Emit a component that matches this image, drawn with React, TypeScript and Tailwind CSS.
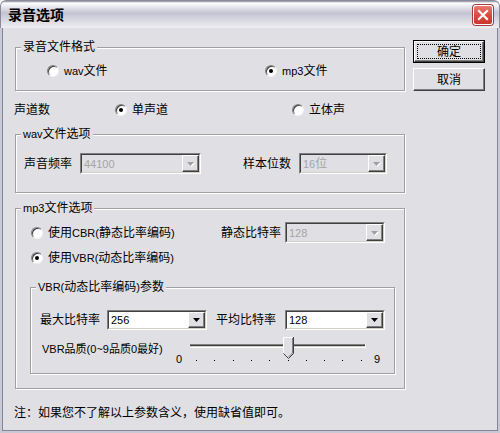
import React from "react";

const FONT = { fontFamily: '"Liberation Sans","Noto Sans CJK SC",sans-serif' };

function T({ s }: { s: string }) {
  const parts = s.split(/([\x00-\x7F]+)/).filter((p) => p.length > 0);
  return (
    <>
      {parts.map((p, i) =>
        /^[\x00-\x7F]+$/.test(p) ? (
          <span key={i} className="text-[11px]">
            {p}
          </span>
        ) : (
          <span key={i}>{p}</span>
        )
      )}
    </>
  );
}

function Radio({ checked }: { checked?: boolean }) {
  return (
    <div className="w-[12px] h-[12px] shrink-0 rounded-full bg-white border border-t-[#808080] border-l-[#808080] border-b-[#f4f4f4] border-r-[#f4f4f4] shadow-[inset_1px_1px_0_#404040] flex items-center justify-center">
      {checked && <div className="w-[4px] h-[4px] rounded-full bg-black" />}
    </div>
  );
}

function RadioLabel({ checked, label, className }: { checked?: boolean; label: string; className?: string }) {
  return (
    <div className={`flex items-center h-[14px] gap-[5px] ${className ?? ""}`}>
      <Radio checked={checked} />
      <span className="text-[12px] leading-[14px] text-black whitespace-nowrap">
        <T s={label} />
      </span>
    </div>
  );
}

function Arrow({ disabled }: { disabled?: boolean }) {
  return (
    <svg width="9" height="6" viewBox="0 0 9 6">
      {disabled && <polygon points="2,2 9,2 5.5,6" fill="#ffffff" />}
      <polygon points="1,1 8,1 4.5,5" fill={disabled ? "#a0a0a0" : "#000000"} />
    </svg>
  );
}

function Combo({ className, value, disabled }: { className: string; value: string; disabled?: boolean }) {
  return (
    <div className={`flex shrink-0 border border-t-[#808080] border-l-[#808080] border-b-white border-r-white ${className}`}>
      <div
        className={`flex flex-1 items-stretch border border-t-[#404040] border-l-[#404040] border-b-[#d4d0c8] border-r-[#d4d0c8] ${
          disabled ? "bg-[#e0dfe3]" : "bg-white"
        }`}
      >
        <div
          className={`flex-1 flex items-center pl-[2px] text-[12px] leading-[14px] ${
            disabled ? "text-[#a5a5a5]" : "text-black"
          }`}
        >
          <span>
            <T s={value} />
          </span>
        </div>
        <div className="w-[17px] flex items-center justify-center bg-[#e0dfe3] border border-t-white border-l-white border-b-[#404040] border-r-[#404040] shadow-[inset_-1px_-1px_0_#808080]">
          <Arrow disabled={disabled} />
        </div>
      </div>
    </div>
  );
}

function Group({ label, className, children }: { label: string; className: string; children?: React.ReactNode }) {
  return (
    <div
      className={`relative border border-[#a0a0a0] shadow-[inset_1px_1px_0_#ffffff,1px_1px_0_#ffffff] ${className}`}
    >
      <span className="absolute left-[5px] top-[-8px] px-[2px] bg-[#e0dfe3] text-[12px] leading-[14px] text-black whitespace-nowrap">
        <T s={label} />
      </span>
      {children}
    </div>
  );
}

function Slider() {
  const ticks = [7, 25, 44, 62, 80, 99, 117, 135, 153, 172];
  return (
    <div className="flex items-start h-[26px]">
      <span className="w-[13px] mt-[16px] text-[11px] leading-[12px] text-black">0</span>
      <svg width="177" height="26" viewBox="0 0 177 26">
        <rect x="1" y="7" width="175" height="1" fill="#808080" />
        <rect x="1" y="8" width="175" height="1" fill="#404040" />
        <rect x="1" y="9" width="175" height="1" fill="#d4d0c8" />
        <rect x="1" y="10" width="175" height="1" fill="#ffffff" />
        <rect x="176" y="7" width="1" height="4" fill="#ffffff" />
        {ticks.map((t) => (
          <rect key={t} x={t} y="23" width="1" height="1" fill="#000" />
        ))}
        <polygon points="94,0 104,0 104,16 99,21 94,16" fill="#e0dfe3" />
        <polyline points="94.5,16 94.5,0.5 103.5,0.5" fill="none" stroke="#ffffff" strokeWidth="1" />
        <polyline points="104.5,0 104.5,16.5 99.5,21.5 94.5,16.5" fill="none" stroke="#404040" strokeWidth="1" />
        <polyline points="103.5,1 103.5,16 99.5,20" fill="none" stroke="#808080" strokeWidth="1" />
      </svg>
      <span className="ml-[8px] mt-[16px] text-[11px] leading-[12px] text-black">9</span>
    </div>
  );
}

export default function App() {
  return (
    <div style={FONT} className="w-[500px] h-[433px] bg-[#c9c9d6] flex flex-col rounded-t-[6px] overflow-hidden">
      {/* Title bar */}
      <div className="h-[28px] shrink-0 flex items-center justify-between pl-[7px] pr-[6px] bg-[linear-gradient(to_bottom,#8a8a9a_0px,#ffffff_2px,#e6e6ee_6px,#c4c4d2_12px,#d6d6e0_18px,#eeeef2_27px)] rounded-t-[6px] border-t border-l border-r border-[#8a8a9a]">
        <span className="text-[14px] leading-[16px] font-bold text-black mt-[1px]">录音选项</span>
        <div className="w-[20px] h-[20px] rounded-[3px] border border-white bg-[linear-gradient(to_bottom,#ec7a6e,#dc4a3e_50%,#c8382e)] flex items-center justify-center shadow-[0_0_0_1px_#a04040]">
          <svg width="12" height="12" viewBox="0 0 12 12">
            <path d="M2 2 L10 10 M10 2 L2 10" stroke="#ffffff" strokeWidth="2.2" strokeLinecap="square" />
          </svg>
        </div>
      </div>
      {/* Body */}
      <div className="flex-1 mx-[2px] mb-[2px] bg-[#e0dfe3] border border-t-0 border-[#85859a] pl-[12px] pt-[12px] flex flex-col text-black">
        {/* Row A */}
        <div className="flex">
          <div className="w-[390px]">
            <Group label="录音文件格式" className="mt-[7px] h-[44px]">
              <div className="flex pt-[16px] pl-[31px]">
                <div className="w-[218px]">
                  <RadioLabel label="wav文件" />
                </div>
                <RadioLabel checked label="mp3文件" />
              </div>
            </Group>
          </div>
          <div className="ml-[8px] flex flex-col gap-[5px]">
            <div className="w-[72px] h-[23px] border border-black bg-[#e0dfe3]">
              <div className="w-full h-full border border-t-white border-l-white border-b-[#404040] border-r-[#404040] shadow-[inset_-1px_-1px_0_#808080] flex items-center justify-center p-[2px]">
                <div className="w-full h-full border border-dotted border-black flex items-center justify-center text-[12px] leading-[14px]">
                  确定
                </div>
              </div>
            </div>
            <div className="w-[72px] h-[23px] bg-[#e0dfe3] border border-t-white border-l-white border-b-[#404040] border-r-[#404040] shadow-[inset_-1px_-1px_0_#808080] flex items-center justify-center text-[12px] leading-[14px]">
              取消
            </div>
          </div>
        </div>

        {/* 声道数 */}
        <div className="flex items-center h-[14px] mt-[12px] ml-[-1px]">
          <span className="w-[101px] text-[12px] leading-[14px]">声道数</span>
          <div className="w-[177px]">
            <RadioLabel checked label="单声道" />
          </div>
          <RadioLabel label="立体声" />
        </div>

        {/* wav group */}
        <Group label="wav文件选项" className="w-[390px] h-[59px] mt-[17px]">
          <div className="flex items-center pt-[18px] pl-[8px]">
            <span className="w-[56px] text-[12px] leading-[14px]">声音频率</span>
            <Combo className="w-[121px] h-[21px]" value="44100" disabled />
            <span className="ml-[42px] w-[56px] text-[12px] leading-[14px]">样本位数</span>
            <Combo className="w-[88px] h-[21px]" value="16位" disabled />
          </div>
        </Group>

        {/* mp3 group */}
        <Group label="mp3文件选项" className="w-[390px] h-[181px] mt-[15px]">
          <div className="flex flex-col pt-[13px]">
            <div className="flex items-center pl-[15px]">
              <div className="w-[190px]">
                <RadioLabel label="使用CBR(静态比率编码)" />
              </div>
              <span className="w-[64px] text-[12px] leading-[14px]">静态比特率</span>
              <Combo className="w-[100px] h-[21px]" value="128" disabled />
            </div>
            <div className="pl-[15px] mt-[8px]">
              <RadioLabel checked label="使用VBR(动态比率编码)" />
            </div>
            <Group label="VBR(动态比率编码)参数" className="ml-[14px] w-[365px] h-[87px] mt-[22px]">
              <div className="flex flex-col pt-[22px] pl-[9px]">
                <div className="flex items-center">
                  <span className="w-[67px] text-[12px] leading-[14px]">最大比特率</span>
                  <Combo className="w-[100px] h-[20px]" value="256" />
                  <span className="ml-[9px] w-[69px] text-[12px] leading-[14px]">平均比特率</span>
                  <Combo className="w-[100px] h-[20px]" value="128" />
                </div>
                <div className="flex items-start mt-[7px]">
                  <span className="ml-[2px] w-[134px] mt-[6px] text-[11px] leading-[13px] whitespace-nowrap">
                    VBR品质(0~9品质0最好)
                  </span>
                  <Slider />
                </div>
              </div>
            </Group>
          </div>
        </Group>

        {/* note */}
        <div className="mt-[17px] ml-[-1px] text-[12px] leading-[14px]">
          注：如果您不了解以上参数含义，使用缺省值即可。
        </div>
      </div>
    </div>
  );
}
